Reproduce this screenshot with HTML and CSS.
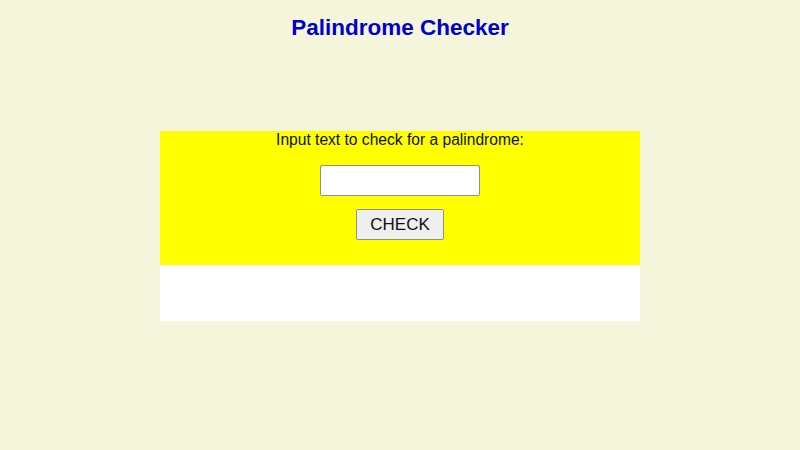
FILE: index.html
```html
<!DOCTYPE html>
<html>
<head>
<meta charset="utf-8">
<link rel="stylesheet" href="styles.css">
</head>
<body>
<h1 class="title">Palindrome Checker</h1>
<main class="container">
  <section class="panel">
    <label class="prompt" for="text-input">Input text to check for a palindrome:</label>
    <input id="text-input" class="text-input" type="text">
    <button class="check-btn" type="button">CHECK</button>
  </section>
  <section class="result"></section>
</main>
</body>
</html>
```
FILE: styles.css
```css
html, body {
  margin: 0;
  padding: 0;
  background: #f5f5dc;
  font-family: "Liberation Sans", Arial, sans-serif;
}
.title {
  margin: 14px 0 0;
  font-size: 22.5px;
  line-height: 28px;
  font-weight: bold;
  color: #0000cd;
  text-align: center;
}
.container {
  width: 480px;
  margin: 89px auto 0;
}
.panel {
  background: #ffff00;
  display: flex;
  flex-direction: column;
  align-items: center;
  padding: 0 0 25px;
}
.prompt {
  font-size: 15.6px;
  line-height: 18px;
  color: #111;
}
.text-input {
  box-sizing: border-box;
  margin-top: 16px;
  width: 160px;
  height: 31px;
  border: 1px solid #8f8f8f;
  border-radius: 2px;
  background: #fff;
  padding: 0 4px;
}
.check-btn {
  box-sizing: border-box;
  margin-top: 13px;
  width: 88px;
  height: 31px;
  font-family: "Liberation Sans", Arial, sans-serif;
  font-size: 17px;
  color: #111;
  background: #efefef;
  border: 1px solid #8f8f8f;
  border-radius: 2px;
  padding: 0;
}
.result {
  background: #fff;
  height: 56px;
}
```
